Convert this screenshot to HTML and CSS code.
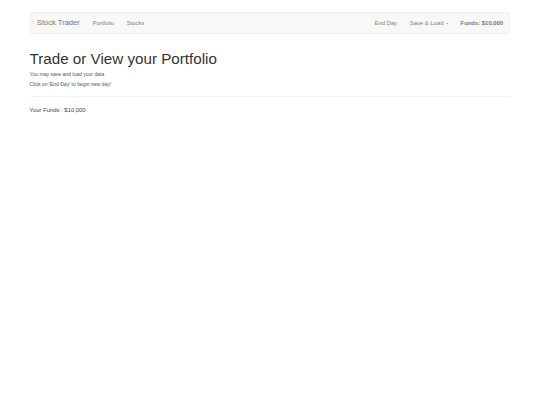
FILE: index.html
```html
<!DOCTYPE html>
<html lang="en">
<head>
<meta charset="utf-8">
<title>Stock Trader</title>
<link rel="stylesheet" href="styles.css">
</head>
<body>
<div class="container">
  <nav class="navbar">
    <a class="brand" href="#">Stock Trader</a>
    <ul class="nav">
      <li><a href="#">Portfolio</a></li>
      <li><a href="#">Stocks</a></li>
    </ul>
    <ul class="nav nav-right">
      <li><a href="#">End Day</a></li>
      <li><a href="#">Save &amp; Load <span class="caret"></span></a></li>
    </ul>
    <strong class="navbar-text">Funds: $10,000</strong>
  </nav>
  <div class="content">
    <h1>Trade or View your Portfolio</h1>
    <h6>You may save and load your data</h6>
    <h6>Click on 'End Day' to begin new day!</h6>
    <hr>
    <p>Your Funds : $10,000</p>
  </div>
</div>
</body>
</html>
```
FILE: styles.css
```css
* { box-sizing: border-box; }
html, body { margin: 0; padding: 0; background: #fff; }
body {
  font-family: "Liberation Sans", Helvetica, Arial, sans-serif;
  font-size: 5.906px;
  line-height: 1.42857;
  color: #333;
}
.container {
  width: 493.6px;
  margin: 0 auto;
  padding: 12px 6.33px 0;
}
.navbar {
  display: flex;
  align-items: center;
  background: #f8f8f8;
  border: 1px solid #f0f0f0;
  border-radius: 1.7px;
  padding: 0 6.33px;
  margin-bottom: 8.44px;
}
.brand {
  font-size: 7.59px;
  line-height: 8.44px;
  padding: 6.3px 6.33px 5.7px;
  margin-left: -6.33px;
  color: #777;
  text-decoration: none;
}
.nav {
  display: flex;
  list-style: none;
  margin: 0;
  padding: 0;
}
.nav a {
  display: block;
  padding: 6.3px 6.33px 5.7px;
  line-height: 8.44px;
  color: #808080;
  text-decoration: none;
}
.nav-right { margin-left: auto; }
.caret {
  display: inline-block;
  width: 0;
  height: 0;
  margin-left: 0.84px;
  vertical-align: middle;
  border-top: 1.7px dashed;
  border-right: 1.7px solid transparent;
  border-left: 1.7px solid transparent;
}
.navbar-text {
  margin-left: 6.33px;
  padding-top: 0.6px;
  color: #777;
  font-weight: bold;
  line-height: 8.44px;
}
.content { padding-top: 0.1px; }
h1 {
  font-size: 15.19px;
  line-height: 1.1;
  font-weight: normal;
  margin: 8.44px 0 4.22px;
}
h6 {
  font-size: 5.06px;
  line-height: 1.1;
  font-weight: normal;
  margin: 4.22px 0;
  color: #555;
}
hr {
  margin: 8.44px 0;
  border: 0;
  border-top: 1px solid #f2f2f2;
  height: 0;
}
p { margin: 0 0 4.22px; color: #444; }
```
